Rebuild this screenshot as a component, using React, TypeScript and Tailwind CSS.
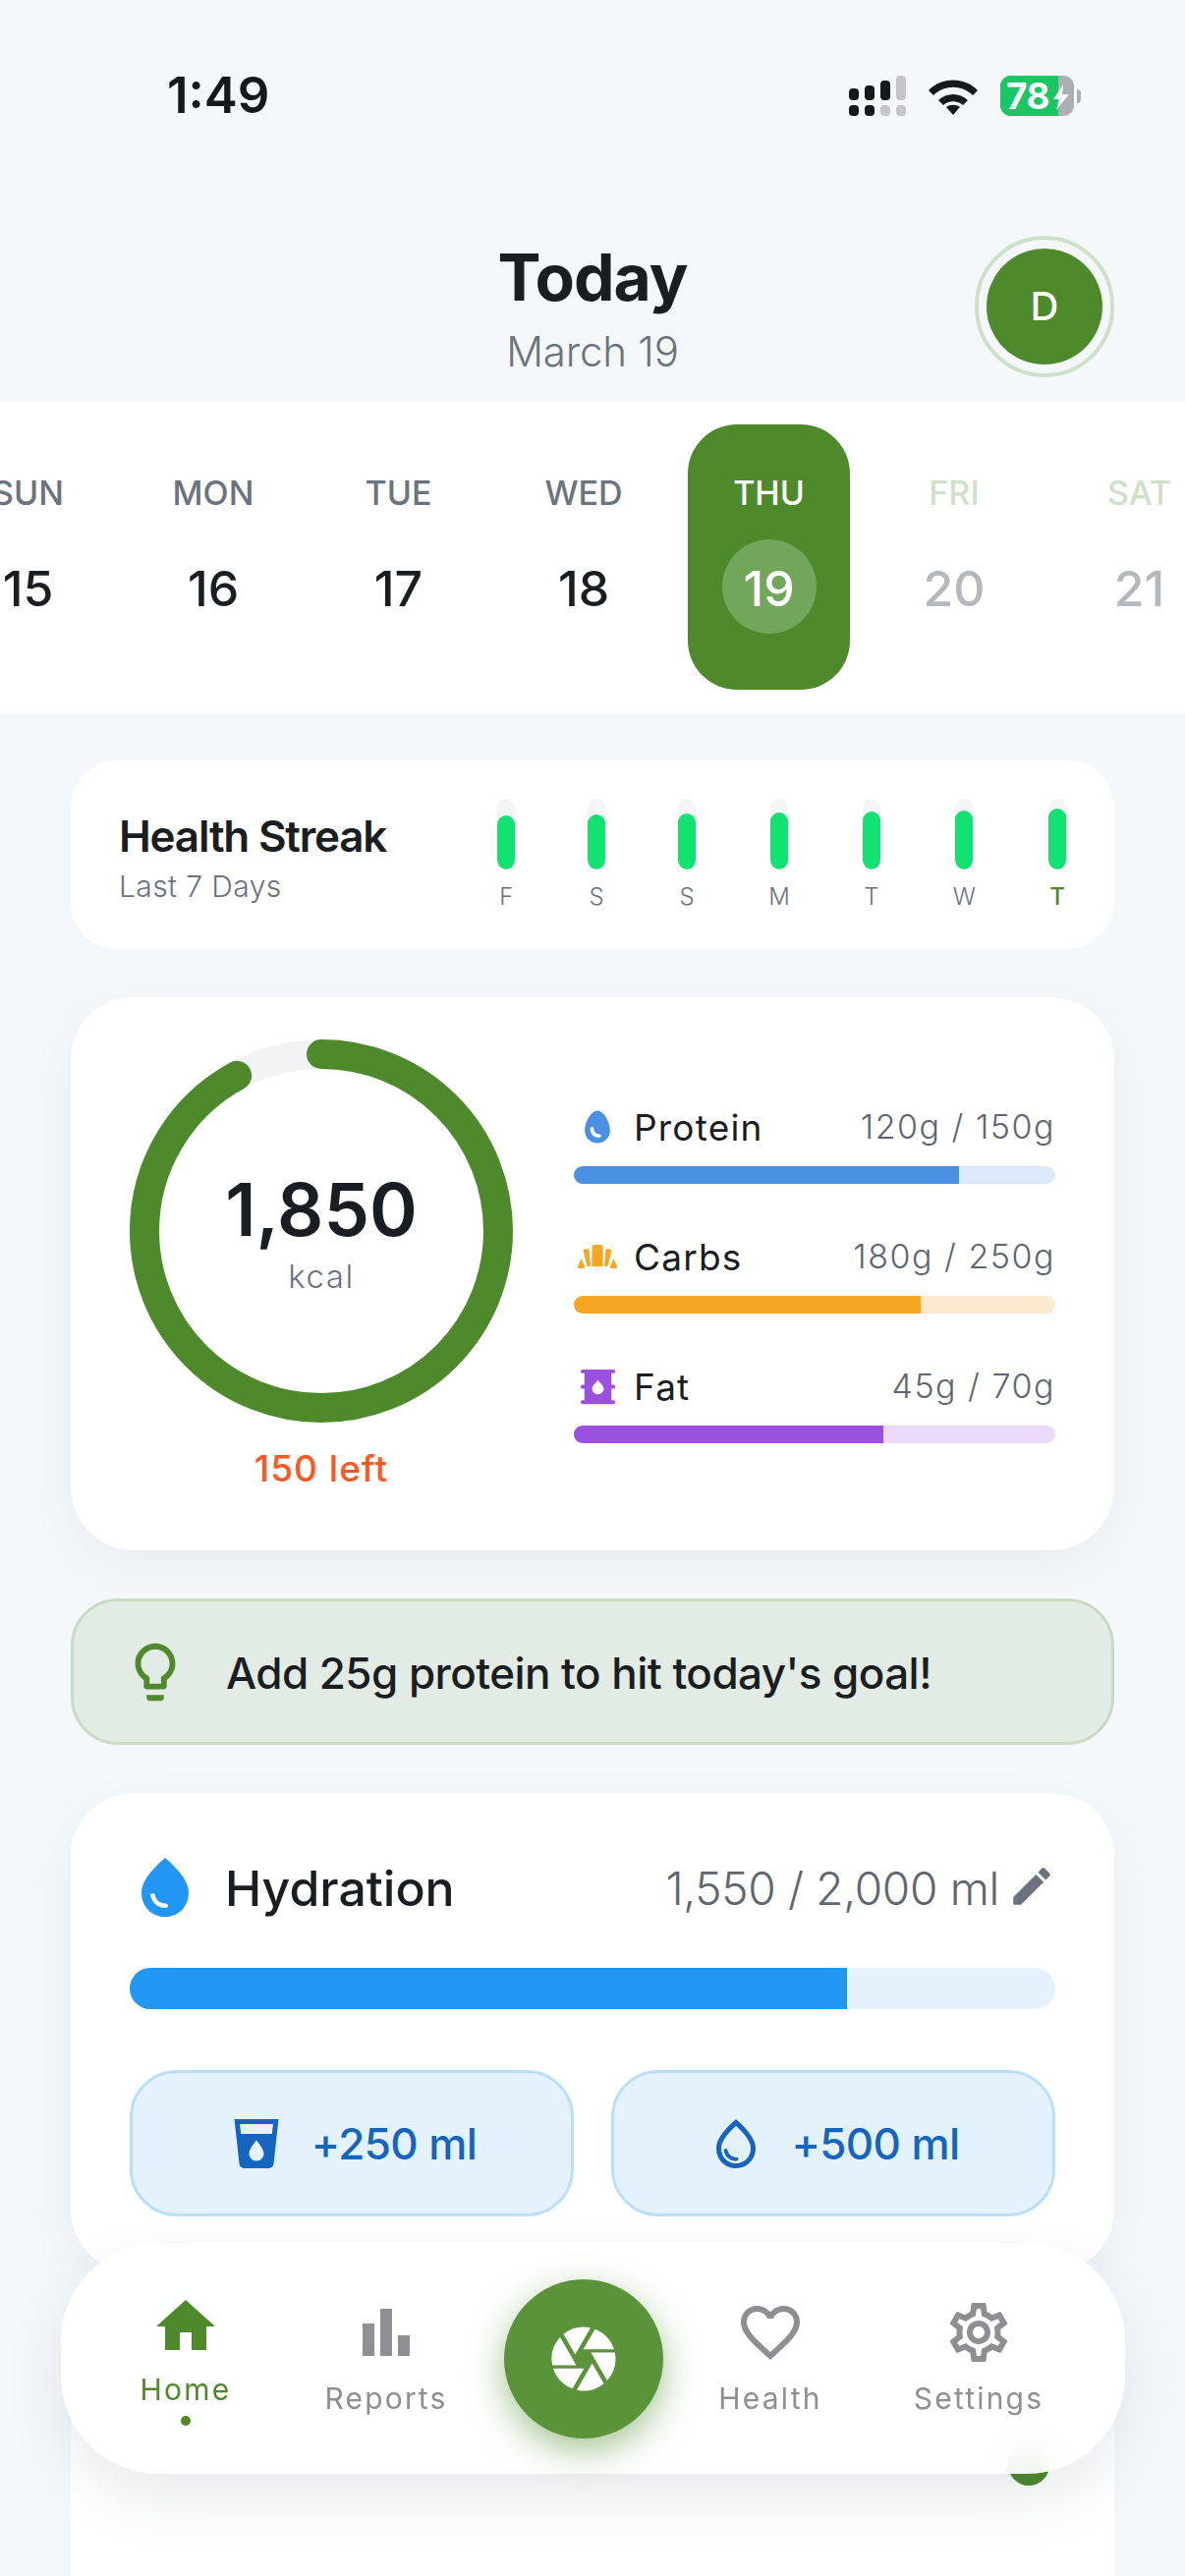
import {
  MdBarChart,
  MdCamera,
  MdEdit,
  MdEgg,
  MdFavoriteBorder,
  MdHome,
  MdLightbulbOutline,
  MdLocalDrink,
  MdOilBarrel,
  MdOutlineSettings,
  MdOutlineWaterDrop,
  MdWaterDrop,
} from "react-icons/md";
import type { ReactNode } from "react";

const days = [
  { name: "SUN", num: "15" },
  { name: "MON", num: "16" },
  { name: "TUE", num: "17" },
  { name: "WED", num: "18" },
  { name: "THU", num: "19", active: true },
  { name: "FRI", num: "20", future: true },
  { name: "SAT", num: "21", future: true },
];

const streak = [
  { day: "F", fill: 55 },
  { day: "S", fill: 56 },
  { day: "S", fill: 57 },
  { day: "M", fill: 58 },
  { day: "T", fill: 59 },
  { day: "W", fill: 60 },
  { day: "T", fill: 62, today: true },
];

function StatusBar() {
  return (
    <div className="flex h-[196px] items-start justify-between pl-[170px] pr-[106px] pt-[70px]">
      <span className="text-[51px] font-semibold leading-[54px] text-[#15181c]">1:49</span>
      <div className="flex items-center pt-[7px]">
        <svg width="58" height="41" viewBox="0 0 58 41">
          <g fill="#15181c">
            <rect x="0" y="13" width="10" height="12" rx="4" />
            <rect x="16" y="10" width="10" height="15" rx="4" />
            <rect x="32" y="5" width="10" height="20" rx="4" />
            <rect x="0" y="30" width="10" height="11" rx="4" />
            <rect x="16" y="30" width="10" height="11" rx="4" />
          </g>
          <g fill="#c4c6cb">
            <rect x="48" y="0" width="10" height="25" rx="4" />
            <rect x="32" y="30" width="10" height="11" rx="4" />
            <rect x="48" y="30" width="10" height="11" rx="4" />
          </g>
        </svg>
        <svg className="ml-[22px]" width="52" height="39" viewBox="0 0 52 39">
          <path d="M1 14C14 0 38 0 51 14l-5 5C35 8 17 8 6 19z" fill="#15181c" />
          <path d="M11 24c8-8 22-8 30 0l-5 5c-6-5-14-5-20 0z" fill="#15181c" />
          <path d="M19 31c4-3 10-3 14 0l-7 8z" fill="#15181c" />
        </svg>
        <div className="relative ml-[22px] flex h-[41px] w-[75px] items-center rounded-[11px] bg-[#abaeb2]">
          <div className="absolute inset-y-0 left-0 w-[59px] rounded-l-[11px] bg-[#19c665]" />
          <span className="relative pl-[6px] text-[37px] font-bold leading-none tracking-[-0.5px] text-white">78</span>
          <svg className="absolute left-[54px] top-[9px]" width="16" height="26" viewBox="0 0 16 26">
            <path d="M10 0 0 15h6l-3 11 13-16H9z" fill="#fff" />
          </svg>
        </div>
        <div className="ml-[3px] h-[14px] w-[4px] rounded-r-full bg-[#abaeb2]" />
      </div>
    </div>
  );
}

function Header() {
  return (
    <div className="grid h-[212px] grid-cols-[1fr_auto_1fr] items-start px-[72px] pt-[44px]">
      <div />
      <div className="flex flex-col items-center">
        <h1 className="mt-[2px] text-[66px] font-bold leading-[80px] tracking-[-1px] text-[#1a1d21]">Today</h1>
        <p className="mt-[11px] text-[42px] font-light leading-[50px] tracking-[-0.2px] text-[#6b7280]">March 19</p>
      </div>
      <div className="flex justify-end">
        <div className="flex h-[144px] w-[142px] items-center justify-center rounded-full border-[4px] border-[#cfe0c8]">
          <div className="flex h-[118px] w-[118px] items-center justify-center rounded-full bg-[#4e8a2c] text-[40px] font-medium text-white">
            D
          </div>
        </div>
      </div>
    </div>
  );
}

function DateStrip() {
  return (
    <div className="flex h-[318px] items-center overflow-hidden bg-white">
      <div className="-ml-[54px] flex items-center gap-[23.5px]">
        {days.map((d) => (
          <div
            key={d.name}
            className={
              d.active
                ? "flex h-[270px] w-[165px] shrink-0 flex-col items-center rounded-[50px] bg-[#4e8a2c] pt-[50px]"
                : "flex h-[270px] w-[165px] shrink-0 flex-col items-center pt-[50px]"
            }
          >
            <span
              className={
                d.active
                  ? "text-[34px] font-medium leading-[40px] text-white"
                  : d.future
                    ? "text-[34px] font-medium leading-[40px] text-[#cfe0c8]"
                    : "text-[34px] font-medium leading-[40px] text-[#6b7280]"
              }
            >
              {d.name}
            </span>
            <span
              className={
                d.active
                  ? "mt-[27px] flex h-[96px] w-[96px] items-center justify-center rounded-full bg-[#72a65a] pt-[5px] text-[50px] font-medium text-white"
                  : d.future
                    ? "mt-[27px] flex h-[96px] w-[96px] items-center justify-center pt-[5px] text-[50px] font-medium text-[#b5b9bd]"
                    : "mt-[27px] flex h-[96px] w-[96px] items-center justify-center pt-[5px] text-[50px] font-medium text-[#1a1d21]"
              }
            >
              {d.num}
            </span>
          </div>
        ))}
      </div>
    </div>
  );
}

function HealthStreak() {
  return (
    <div className="flex h-[192px] items-center justify-between rounded-[48px] bg-white pl-[49px] pr-[49px]">
      <div className="pt-[5px]">
        <div className="text-[44px] font-semibold leading-[52px] tracking-[-1.2px] text-[#1a1d21]">Health Streak</div>
        <div className="mt-[7px] text-[30px] font-light leading-[36px] tracking-[0.4px] text-[#6b7280]">Last 7 Days</div>
      </div>
      <div className="flex gap-[74px]">
        {streak.map((s, i) => (
          <div key={i} className="flex min-w-[18px] flex-col items-center">
            <div className="flex h-[72px] w-[18px] flex-col justify-end overflow-hidden rounded-full bg-[#f3f5f7]">
              <div className="w-full rounded-full bg-[#12e272]" style={{ height: s.fill }} />
            </div>
            <span
              className={
                s.today
                  ? "mt-[14px] text-[24px] font-medium leading-[28px] text-[#4e8a2c]"
                  : "mt-[14px] text-[24px] font-light leading-[28px] text-[#6b7280]"
              }
            >
              {s.day}
            </span>
          </div>
        ))}
      </div>
    </div>
  );
}

function CalorieRing() {
  return (
    <div className="flex w-[390px] flex-col items-center">
      <div className="relative h-[390px] w-[390px]">
        <svg width="390" height="390" viewBox="0 0 390 390" className="-rotate-90">
          <circle cx="195" cy="195" r="180" fill="none" stroke="#f1f3f5" strokeWidth="30" />
          <circle
            cx="195"
            cy="195"
            r="180"
            fill="none"
            stroke="#4e8a2c"
            strokeWidth="30"
            strokeLinecap="round"
            strokeDasharray="1041 1131"
          />
        </svg>
        <div className="absolute inset-0 flex flex-col items-center justify-center">
          <span className="text-[74px] font-semibold leading-[86px] text-[#1a1d21]">1,850</span>
          <span className="mt-[5px] text-[33px] font-light leading-[40px] tracking-[1.5px] text-[#6b7280]">kcal</span>
        </div>
      </div>
      <span className="mt-[25px] text-[37px] font-medium leading-[44px] tracking-[1px] text-[#ff5722]">150 left</span>
    </div>
  );
}

function CarbsIcon() {
  return (
    <svg width="40" height="24" viewBox="0 0 40 24" className="text-[#f5a623]">
      <g fill="currentColor">
        <path d="M14.5 2.5Q14.500 0 17 0h6q2.500 0 2.500 2.500V22h-11z" />
        <path d="M5.500 5.500Q8 3.500 11.500 4.500L13 22H9.500z" />
        <path d="M3.500 14 7 22q.3 2-2 2H1.500q-1.800 0-1.500-2z" />
        <path d="M34.500 5.500Q32 3.500 28.500 4.500L27 22h3.500z" />
        <path d="M36.500 14 33 22q-.3 2 2 2h3.500q1.800 0 1.500-2z" />
      </g>
    </svg>
  );
}

function MacroRow({
  icon,
  label,
  value,
  pct,
  fill,
  track,
}: {
  icon: ReactNode;
  label: string;
  value: string;
  pct: number;
  fill: string;
  track: string;
}) {
  return (
    <div>
      <div className="flex h-[50px] items-center">
        <div className="flex w-[48px] justify-center">{icon}</div>
        <span className="ml-[13px] text-[37px] leading-none tracking-[1.2px] text-[#1a1d21]">{label}</span>
        <span className="ml-auto text-[34px] font-light leading-none tracking-[1.5px] text-[#5f6672]">{value}</span>
      </div>
      <div className={`mt-[15px] h-[18px] overflow-hidden rounded-full ${track}`}>
        <div className={`h-full ${fill}`} style={{ width: `${pct}%` }} />
      </div>
    </div>
  );
}

function MacroCard() {
  return (
    <div className="flex h-[563px] items-start rounded-[64px] bg-white pl-[60px] pr-[60px] pt-[43px] shadow-[0_16px_48px_rgba(30,50,80,0.06)]">
      <CalorieRing />
      <div className="ml-[62px] flex flex-1 flex-col gap-[49px] pt-[64px]">
        <MacroRow
          icon={<MdEgg size={44} className="text-[#4a90e2]" />}
          label="Protein"
          value="120g / 150g"
          pct={80}
          fill="bg-[#4a90e2]"
          track="bg-[#dce9fa]"
        />
        <MacroRow
          icon={<CarbsIcon />}
          label="Carbs"
          value="180g / 250g"
          pct={72}
          fill="bg-[#f5a623]"
          track="bg-[#fde9d0]"
        />
        <MacroRow
          icon={<MdOilBarrel size={47} className="text-[#9b51e0]" />}
          label="Fat"
          value="45g / 70g"
          pct={64.3}
          fill="bg-[#9b51e0]"
          track="bg-[#ead9f9]"
        />
      </div>
    </div>
  );
}

function Tip() {
  return (
    <div className="flex h-[149px] items-center rounded-[48px] border-[3px] border-[#cadbc4] bg-[#e3ece4] pl-[50px]">
      <MdLightbulbOutline size={70} className="-ml-[2px] text-[#4e8a2c]" />
      <span className="ml-[37px] pt-[2px] text-[44px] font-medium leading-none tracking-[-0.55px] text-[#1a1d21]">
        Add 25g protein to hit today's goal!
      </span>
    </div>
  );
}

function Hydration() {
  return (
    <div className="h-[488px] rounded-[64px] bg-white px-[60px] pt-[60px] shadow-[0_16px_48px_rgba(30,50,80,0.06)]">
      <div className="flex h-[72px] items-center">
        <MdWaterDrop size={72} className="text-[#2196f3]" />
        <span className="ml-[25px] pt-[2px] text-[50px] font-medium leading-none text-[#1a1d21]">Hydration</span>
        <span className="ml-auto pt-[2px] text-[46px] font-light leading-none tracking-[-0.3px] text-[#5f6672]">1,550 / 2,000 ml</span>
        <MdEdit size={50} className="-mr-[1px] mb-[2px] ml-[8px] text-[#6b7280]" />
      </div>
      <div className="mt-[46px] h-[42px] overflow-hidden rounded-full bg-[#e3f2fd]">
        <div className="h-full w-[77.5%] bg-[#2196f3]" />
      </div>
      <div className="mt-[62px] flex gap-[38px]">
        <button className="flex h-[149px] flex-1 items-center justify-center rounded-[48px] border-[3px] border-[#bbdefb] bg-[#e3f2fd]">
          <MdLocalDrink size={60} className="text-[#1565c0]" />
          <span className="ml-[26px] text-[44px] font-medium leading-none tracking-[-0.6px] text-[#1565c0]">+250 ml</span>
        </button>
        <button className="flex h-[149px] flex-1 items-center justify-center rounded-[48px] border-[3px] border-[#bbdefb] bg-[#e3f2fd]">
          <MdOutlineWaterDrop size={60} className="text-[#1565c0]" />
          <span className="ml-[26px] text-[44px] font-medium leading-none tracking-[-0.6px] text-[#1565c0]">+500 ml</span>
        </button>
      </div>
    </div>
  );
}

function NextCard() {
  return (
    <div className="relative h-[400px] rounded-[64px] bg-white">
      <div className="absolute left-[954px] top-[126px] h-[42px] w-[42px] rounded-full bg-[#4e8a2c]" />
    </div>
  );
}

function Tab({
  icon,
  label,
  active,
  cell,
}: {
  icon: ReactNode;
  label: string;
  active?: boolean;
  cell: string;
}) {
  return (
    <div className={`flex flex-col items-center ${cell}`}>
      {icon}
      <span
        className={
          active
            ? "mt-[10px] text-[30px] leading-[36px] tracking-[2.2px] text-[#4e8a2c]"
            : "mb-[5px] mt-[13px] text-[30px] leading-[36px] tracking-[2.2px] text-[#8e8e93]"
        }
      >
        {label}
      </span>
      {active && <span className="mt-[9px] h-[10px] w-[10px] rounded-full bg-[#4e8a2c]" />}
    </div>
  );
}

function BottomNav() {
  return (
    <div className="absolute left-[62px] top-[2283px] flex h-[235px] w-[1083px] items-center rounded-[100px] bg-white/90 pl-[25px] shadow-[0_24px_60px_rgba(30,50,80,0.1)] backdrop-blur-xl">
      <Tab cell="w-[204px]" active label="Home" icon={<MdHome size={72} className="text-[#4e8a2c]" />} />
      <Tab cell="w-[204px]" label="Reports" icon={<MdBarChart size={72} className="text-[#8e8e93]" />} />
      <div className="flex w-[198px] justify-center">
        <div className="flex h-[162px] w-[162px] items-center justify-center rounded-full bg-[#5a9339] shadow-[0_12px_36px_rgba(78,138,44,0.5)]">
          <MdCamera size={78} className="text-white" />
        </div>
      </div>
      <Tab cell="w-[182px]" label="Health" icon={<MdFavoriteBorder size={72} className="text-[#8e8e93]" />} />
      <Tab cell="w-[242px]" label="Settings" icon={<MdOutlineSettings size={72} className="text-[#8e8e93]" />} />
    </div>
  );
}

export default function App() {
  return (
    <div className="relative h-[2622px] w-[1206px] overflow-hidden bg-[#f5f8fb] font-['Inter',sans-serif]">
      <StatusBar />
      <Header />
      <DateStrip />
      <div className="flex flex-col gap-[49px] px-[72px] pt-[48px]">
        <HealthStreak />
        <MacroCard />
        <Tip />
        <Hydration />
        <NextCard />
      </div>
      <BottomNav />
    </div>
  );
}
